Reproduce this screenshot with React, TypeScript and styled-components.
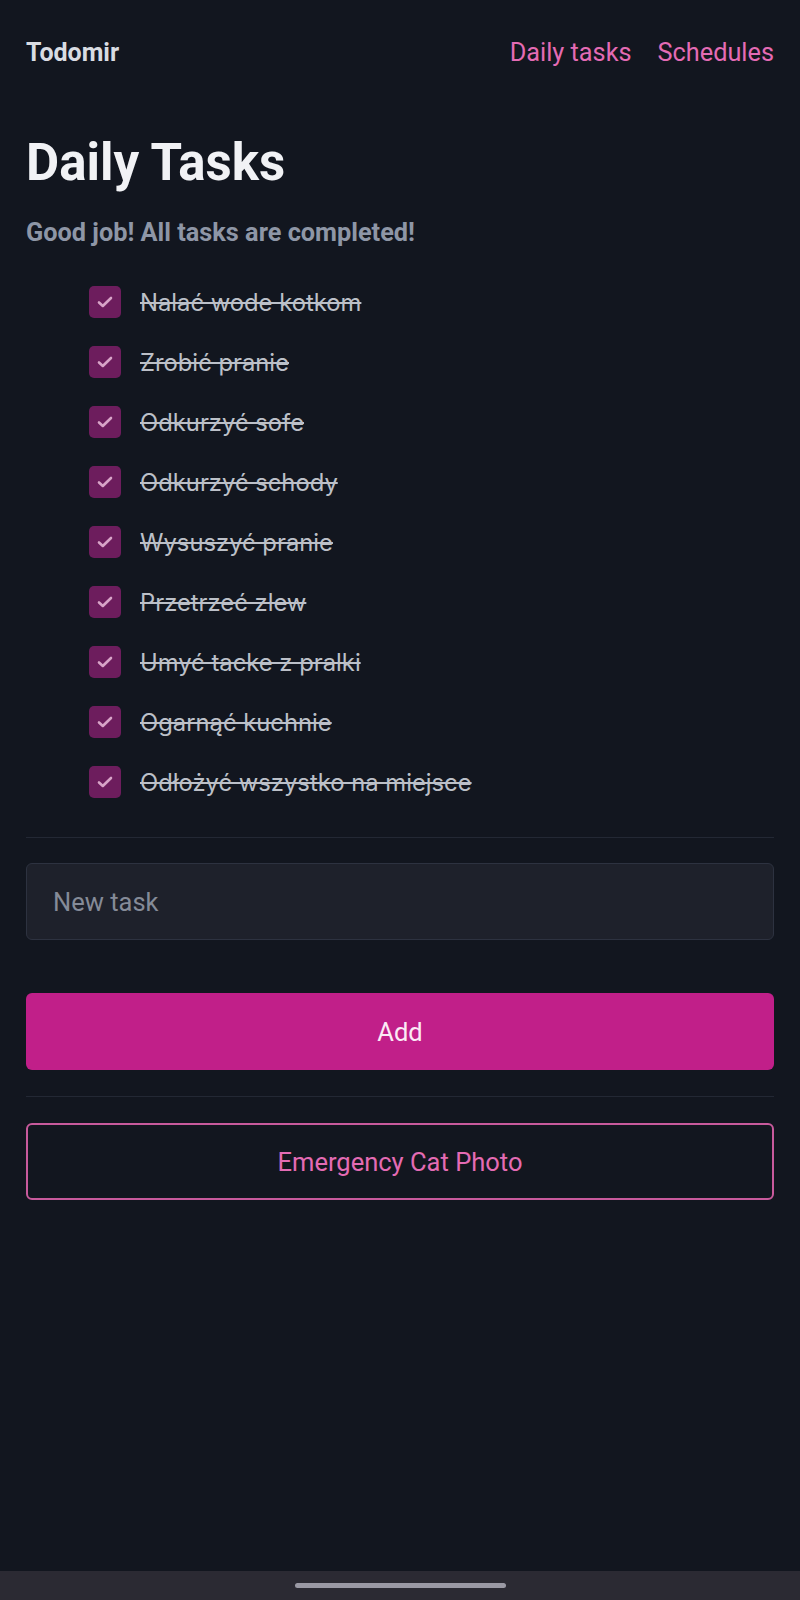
import styled, { createGlobalStyle } from 'styled-components';

const GlobalStyle = createGlobalStyle`
  html, body {
    margin: 0;
    padding: 0;
    background: #12161f;
    min-height: 100vh;
  }
  * {
    box-sizing: border-box;
  }
`;

const Page = styled.div`
  min-height: 1600px;
  padding: 0 26px;
  font-family: Roboto, 'Liberation Sans', sans-serif;
  color: #eef0f4;
`;

const Header = styled.header`
  height: 104px;
  display: flex;
  justify-content: space-between;
  align-items: center;
`;

const Brand = styled.div`
  font-size: 25px;
  font-weight: 700;
  color: #d9dce2;
`;

const NavLinks = styled.nav`
  display: flex;
  gap: 26px;
`;

const NavLink = styled.a`
  font-size: 25.3px;
  color: #e46bb4;
  text-decoration: none;
`;

const Title = styled.h1`
  margin: 31px 0 0;
  font-size: 51px;
  line-height: 56px;
  font-weight: 700;
  color: #f1f2f5;
`;

const Status = styled.p`
  margin: 26px 0 0;
  font-size: 25.3px;
  line-height: 32px;
  font-weight: 700;
  color: #8e96a6;
`;

const TaskList = styled.ul`
  list-style: none;
  margin: 23px 0 0;
  padding: 0 0 0 63px;
`;

const TaskRow = styled.li`
  height: 60px;
  display: flex;
  align-items: center;
  gap: 19px;
`;

const Checkbox = styled.span<{ $checked: boolean }>`
  width: 32px;
  height: 32px;
  border-radius: 5px;
  flex: none;
  display: flex;
  align-items: center;
  justify-content: center;
  background: ${({ $checked }) => ($checked ? '#6d1d5d' : 'transparent')};
  border: ${({ $checked }) => ($checked ? 'none' : '2px solid #4b5263')};
`;

const TaskText = styled.span<{ $done: boolean }>`
  font-family: Inter, 'Liberation Sans', sans-serif;
  font-size: 23.8px;
  color: #bcc0c8;
  text-decoration: ${({ $done }) => ($done ? 'line-through' : 'none')};
`;

const Divider = styled.hr`
  margin: 25px 0 0;
  border: none;
  border-top: 1px solid #232834;
`;

const Input = styled.input`
  display: block;
  width: 100%;
  height: 77px;
  margin-top: 25px;
  padding: 0 26px;
  background: #1e212b;
  border: 1px solid #2d3240;
  border-radius: 6px;
  font-family: Roboto, 'Liberation Sans', sans-serif;
  font-size: 25.5px;
  color: #eef0f4;
  outline: none;

  &::placeholder {
    color: #858b98;
  }
`;

const Button = styled.button<{ $variant: 'solid' | 'outline' }>`
  display: block;
  width: 100%;
  height: 77px;
  margin-top: ${({ $variant }) => ($variant === 'solid' ? '53px' : '26px')};
  border-radius: 6px;
  font-family: Roboto, 'Liberation Sans', sans-serif;
  font-size: 25.5px;
  cursor: pointer;
  background: ${({ $variant }) => ($variant === 'solid' ? '#c11f89' : 'transparent')};
  color: ${({ $variant }) => ($variant === 'solid' ? '#fbeaf5' : '#e46bb4')};
  border: ${({ $variant }) => ($variant === 'solid' ? 'none' : '2px solid #c85a9c')};
`;

const SecondDivider = styled(Divider)`
  margin-top: 26px;
`;

const SystemBar = styled.div`
  position: fixed;
  left: 0;
  right: 0;
  bottom: 0;
  height: 29px;
  background: #2b2a33;
  display: flex;
  align-items: center;
  justify-content: center;
`;

const Handle = styled.div`
  width: 211px;
  height: 5px;
  border-radius: 3px;
  background: #9a99a4;
`;

const tasks = [
  'Nalać wode kotkom',
  'Zrobić pranie',
  'Odkurzyć sofe',
  'Odkurzyć schody',
  'Wysuszyć pranie',
  'Przetrzeć zlew',
  'Umyć tacke z pralki',
  'Ogarnąć kuchnie',
  'Odłożyć wszystko na miejsce',
];

function CheckIcon() {
  return (
    <svg width="20" height="20" viewBox="0 0 20 20" fill="none">
      <path
        d="M4 10.5l3.8 3.5L16 6"
        stroke="#d8a4c8"
        strokeWidth="2.6"
        strokeLinecap="round"
        strokeLinejoin="round"
      />
    </svg>
  );
}

export default function App() {
  return (
    <>
      <GlobalStyle />
      <Page>
        <Header>
          <Brand>Todomir</Brand>
          <NavLinks>
            <NavLink href="#">Daily tasks</NavLink>
            <NavLink href="#">Schedules</NavLink>
          </NavLinks>
        </Header>

        <Title>Daily Tasks</Title>
        <Status>Good job! All tasks are completed!</Status>

        <TaskList>
          {tasks.map((task) => (
            <TaskRow key={task}>
              <Checkbox $checked>
                <CheckIcon />
              </Checkbox>
              <TaskText $done>{task}</TaskText>
            </TaskRow>
          ))}
        </TaskList>

        <Divider />
        <Input placeholder="New task" />
        <Button $variant="solid">Add</Button>
        <SecondDivider />
        <Button $variant="outline">Emergency Cat Photo</Button>
      </Page>
      <SystemBar>
        <Handle />
      </SystemBar>
    </>
  );
}
